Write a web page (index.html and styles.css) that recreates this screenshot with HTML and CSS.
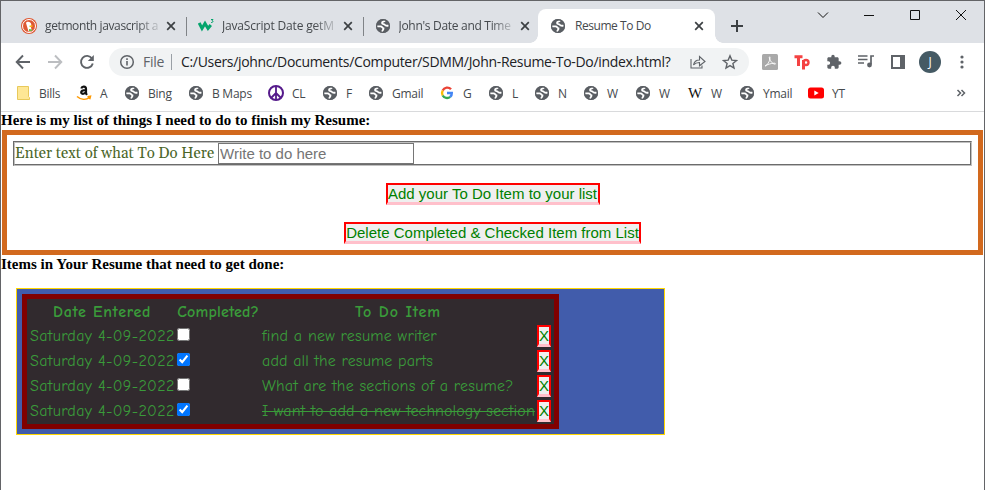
FILE: index.html
```html
<!DOCTYPE html>
<html lang="en">
<head>
<meta charset="utf-8">
<title>Resume To Do</title>
<link rel="stylesheet" href="styles.css">
</head>
<body>
<svg class="defs" width="0" height="0" aria-hidden="true">
  <symbol id="globe" viewBox="0 0 16 16"><circle cx="8" cy="8" r="7" fill="#5a5e63"/><path d="M2 8.300h3.500c1.800 0 1.500 1.700 3 2 .3 1.300-1.200 1.700-1.500 3.500M10 2.500c-.5 1.600-3 .9-3 2.400 0 1.400 2 1 3.200 2.200 1 .9 2 .6 3.500.6" fill="none" stroke="#fff" stroke-width="1.800"/><circle cx="8" cy="8" r="6.400" fill="none" stroke="#5a5e63" stroke-width="1.300"/></symbol>
  <symbol id="x" viewBox="0 0 10 10"><path d="M1.200 1.200l7.600 7.600M8.800 1.200L1.200 8.800" stroke="#3c4043" stroke-width="1.700" fill="none"/></symbol>
</svg>
<div class="window">
  <div class="tabs">
    <div class="tab"><svg class="fav" viewBox="0 0 16 16"><circle cx="8" cy="8" r="8" fill="#de5833"/><circle cx="8" cy="8" r="6.500" fill="none" stroke="#fff" stroke-width="1"/><path d="M5 5C5.500 3 10 3 10.300 6.500L10 9.500l1 3.500-3.500.5z" fill="#fff"/><path d="M8.500 7.500h3.500l-1 1.500H8.500z" fill="#fdb913"/><path d="M8 11l3 .5v1.500H8z" fill="#65bc46"/></svg><span class="title fade t1">getmonth javascript a</span><svg class="x"><use href="#x"/></svg></div>
    <div class="tab"><svg class="fav" viewBox="0 0 16 16"><path d="M1.200 5l2.800 5.500L7 5.500l3 5L12.800 7" fill="none" stroke="#04a46c" stroke-width="3"/><path d="M13 1.500h2l-1 1.300c1.500 0 1.200 2-.9 1.700" fill="none" stroke="#04a46c"/></svg><span class="title fade t2">JavaScript Date getM</span><svg class="x"><use href="#x"/></svg></div>
    <div class="tab"><svg class="fav"><use href="#globe"/></svg><span class="title fade t3">John's Date and Time</span><svg class="x"><use href="#x"/></svg></div>
    <div class="tab active"><svg class="fav"><use href="#globe"/></svg><span class="title t4">Resume To Do</span><svg class="x"><use href="#x"/></svg></div>
    <svg class="plus" viewBox="0 0 12 12"><path d="M6 0v12M0 6h12" stroke="#3c4043" stroke-width="2"/></svg>
    <div class="controls">
      <svg viewBox="0 0 12 12"><path d="M1 3.500l5 5 5-5" /></svg>
      <svg viewBox="0 0 12 12"><path d="M1 6.500h10"/></svg>
      <svg viewBox="0 0 12 12"><path d="M1.500 1.500h9v9h-9z"/></svg>
      <svg viewBox="0 0 12 12"><path d="M1 1l10 10M11 1L1 11"/></svg>
    </div>
  </div>

  <div class="toolbar">
    <div class="nav">
      <svg viewBox="0 0 16 16"><path d="M15 8H2M8 1.500L1.700 8 8 14.500" stroke="#5f6368"/></svg>
      <svg viewBox="0 0 16 16"><path d="M1 8h13M8 1.500L14.300 8 8 14.500" stroke="#bcbec1"/></svg>
      <svg viewBox="0 0 16 16"><path d="M13 4.500A6 6 0 1 0 13.800 9.500" stroke="#5f6368"/><path d="M14.800 1v6h-6z" fill="#5f6368" stroke="none"/></svg>
    </div>
    <div class="omnibox">
      <svg class="info" viewBox="0 0 16 16"><circle cx="8" cy="8" r="6.300" fill="none" stroke="#5f6368" stroke-width="1.500"/><path d="M8 7v4.500M8 4.300v1.600" stroke="#5f6368" stroke-width="1.600"/></svg>
      <span class="scheme">File</span><span class="rule"></span><span class="url">C:/Users/johnc/Documents/Computer/SDMM/John-Resume-To-Do/index.html?</span>
      <svg class="share" viewBox="0 0 16 16"><path d="M1 5v9h11v-2.500M3.500 11c.7-3.500 3-5 6-5V2.500l5.500 5-5.500 4.300V8.500C7 8.500 5 9.200 3.500 11z" fill="none" stroke="#5f6368" stroke-width="1.100"/></svg>
      <svg class="star" viewBox="0 0 16 16"><path d="M8 1.800l1.800 4.300 4.700.4-3.600 3 1.100 4.600-4-2.500-4 2.500 1.100-4.600-3.600-3 4.700-.4z" fill="none" stroke="#5f6368" stroke-width="1.400"/></svg>
    </div>
    <div class="ext">
      <svg viewBox="0 0 16 16"><rect width="16" height="16" rx="1.500" fill="#a9a9a9"/><path d="M3 12c2-.5 5-4.500 5-8.500 0-1-1-1-.7.500C8 7 10.500 10 13 10.200c1 0 .5-1.200-1-1-3 .2-6.500 1.200-9 2.800z" fill="none" stroke="#fff" stroke-width=".9"/></svg>
      <svg viewBox="0 0 16 16"><path d="M.5 2.800h8M4.500 3v9M9.500 6v9.500" stroke="#f44242" stroke-width="3" fill="none"/><circle cx="12" cy="8.500" r="2.500" stroke="#f44242" stroke-width="2.400" fill="none"/></svg>
      <svg viewBox="0 0 24 24"><path fill="#5f6368" d="M20.500 11H19V7c0-1.100-.9-2-2-2h-4V3.500C13 2.120 11.880 1 10.500 1S8 2.120 8 3.500V5H4c-1.100 0-2 .9-2 2v3.800h1.500c1.500 0 2.700 1.200 2.700 2.700S5 16.200 3.500 16.200H2V20c0 1.100.9 2 2 2h3.800v-1.500c0-1.500 1.200-2.700 2.700-2.700s2.700 1.200 2.700 2.700V22H17c1.100 0 2-.9 2-2v-4h1.500c1.380 0 2.500-1.120 2.500-2.500S21.880 11 20.500 11z"/></svg>
      <svg viewBox="0 0 16 16"><path d="M0 2h9.500M0 5.500h9.500M0 9h6M13 10.500V2h3" fill="none" stroke="#5f6368" stroke-width="1.700"/><circle cx="11.500" cy="11" r="2.400" fill="#5f6368"/></svg>
      <svg viewBox="0 0 16 16"><path d="M1 1h14v14H1z" fill="#5f6368"/><path d="M3 3h7v10H3z" fill="#fff"/></svg>
      <span class="avatar">J</span>
      <svg viewBox="0 0 16 16" fill="#5f6368"><circle cx="8" cy="3" r="1.600"/><circle cx="8" cy="8" r="1.600"/><circle cx="8" cy="13" r="1.600"/></svg>
    </div>
  </div>

  <div class="bookmarks">
    <span class="bm"><svg viewBox="0 0 16 16"><path d="M2.500 1.500h11v10l1 1v2h-12z" fill="#fee795" stroke="#e8c95b"/></svg>Bills</span>
    <span class="bm"><svg viewBox="0 0 16 16"><path d="M5.300 3.500C6 1 10 1 10 4v4.500l1 1.300M10 5C6.500 5 5 6 5.200 7.500c.3 2 4 1.700 4.800-1" fill="none" stroke="#111" stroke-width="2.200"/><path d="M1 11.500c4 3.500 9 3.500 12.500 1.200M11.500 11.700l3-.5-.8 3" fill="none" stroke="#f90" stroke-width="1.500"/></svg>A</span>
    <span class="bm"><svg><use href="#globe"/></svg>Bing</span>
    <span class="bm"><svg><use href="#globe"/></svg>B Maps</span>
    <span class="bm"><svg viewBox="0 0 16 16"><path d="M8 1v14M8 8l-5 5M8 8l5 5" stroke="#551a8b" stroke-width="1.800"/><circle cx="8" cy="8" r="7" fill="none" stroke="#551a8b" stroke-width="2"/></svg>CL</span>
    <span class="bm"><svg><use href="#globe"/></svg>F</span>
    <span class="bm"><svg><use href="#globe"/></svg>Gmail</span>
    <span class="bm"><svg viewBox="0 0 16 16" fill="none" stroke-width="2.400"><path d="M12 4.300A5 5 0 0 0 3.700 5.500" stroke="#ea4335"/><path d="M3.700 5.500a5 5 0 0 0 0 5" stroke="#fbbc05"/><path d="M3.700 10.500a5 5 0 0 0 7.500 1.400" stroke="#34a853"/><path d="M11.200 11.900A5 5 0 0 0 12.800 8H8" stroke="#4285f4"/></svg>G</span>
    <span class="bm"><svg><use href="#globe"/></svg>L</span>
    <span class="bm"><svg><use href="#globe"/></svg>N</span>
    <span class="bm"><svg><use href="#globe"/></svg>W</span>
    <span class="bm"><svg><use href="#globe"/></svg>W</span>
    <span class="bm"><span class="wiki">W</span>W</span>
    <span class="bm"><svg><use href="#globe"/></svg>Ymail</span>
    <span class="bm"><svg viewBox="0 0 16 16"><rect y="2.500" width="16" height="11" rx="2.500" fill="#f00"/><path d="M6.300 5.500v5L10.700 8z" fill="#fff"/></svg>YT</span>
    <svg class="more" viewBox="0 0 10 8"><path d="M1.500 1l3 3-3 3M5.500 1l3 3-3 3" fill="none" stroke="#5f6368" stroke-width="1.500"/></svg>
  </div>

  <div class="page">
    <h4 class="h1">Here is my list of things I need to do to finish my Resume:</h4>
    <form class="entry">
      <div class="field"><label>Enter text of what To Do Here</label><input type="text" placeholder="Write to do here"></div>
      <button type="button" class="btn add">Add your To Do Item to your list</button>
      <button type="button" class="btn del">Delete Completed &amp; Checked Item from List</button>
    </form>
    <h4 class="h2">Items in Your Resume that need to get done:</h4>
    <div class="list">
      <div class="table">
        <b class="hd c1">Date Entered</b><b class="hd c2">Completed?</b><b class="hd c3">To Do Item</b><span></span>
        <span class="date">Saturday 4-09-2022</span><input type="checkbox"><span class="i1">find a new resume writer</span><button class="btn del-x">X</button>
        <span class="date">Saturday 4-09-2022</span><input type="checkbox" checked><span class="i2">add all the resume parts</span><button class="btn del-x">X</button>
        <span class="date">Saturday 4-09-2022</span><input type="checkbox"><span class="i3">What are the sections of a resume?</span><button class="btn del-x">X</button>
        <span class="date">Saturday 4-09-2022</span><input type="checkbox" checked><span class="i4"><s>I want to add a new technology section</s></span><button class="btn del-x">X</button>
      </div>
    </div>
  </div>
</div>
</body>
</html>
```
FILE: styles.css
```css
* { box-sizing: border-box; }
body { margin: 0; background: #fff; }
svg { display: block; flex: none; }
.defs { position: absolute; }
.window { width: 985px; height: 490px; border: 1px solid #636467; border-bottom: 0; overflow: hidden; font-family: "Open Sans", sans-serif; }

.tabs { height: 42px; background: #dee1e6; display: flex; padding: 8px 0 0 8px; color: #45494d; font-size: 12px; }
.tab { width: 177px; height: 34px; display: flex; align-items: center; padding: 0 9px 0 12px; position: relative; }
.tab + .tab::before { content: ""; position: absolute; left: 0; top: 8px; width: 1px; height: 19px; background: #808387; }
.tab:nth-child(4)::before { display: none; }
.tab:nth-child(2), .tab:nth-child(3) { width: 176.5px; }
.fav { width: 16px; height: 16px; }
.title { width: 115px; margin-left: 8px; white-space: nowrap; overflow: hidden; line-height: 20px; }
.t1 { letter-spacing: -0.38px; }
.t2 { letter-spacing: -0.18px; }
.t3 { letter-spacing: -0.3px; }
.t4 { letter-spacing: -0.45px; }
.fade { -webkit-mask-image: linear-gradient(90deg, #000 80%, transparent 103%); mask-image: linear-gradient(90deg, #000 80%, transparent 103%); }
.x { width: 10px; height: 10px; margin-left: 6px; }
.active { background: #fff; border-radius: 8px 8px 0 0; width: 177px; margin-left: -1px; }
.active .title { margin-left: 9px; width: 113px; }
.active::after { content: ""; position: absolute; left: -8px; bottom: 0; width: 193px; height: 8px; background: radial-gradient(circle at 0 0, transparent 7.5px, #fff 8px) left / 8px 8px no-repeat, radial-gradient(circle at 100% 0, transparent 7.5px, #fff 8px) right / 8px 8px no-repeat; }
.plus { width: 12px; height: 12px; margin: 11px 0 0 16px; }
.controls { display: flex; gap: 34px; margin: 0 17px 0 auto; }
.controls svg { width: 12px; height: 12px; fill: none; stroke: #111; stroke-width: 1; }

.toolbar { height: 37px; display: flex; align-items: center; padding-left: 14px; }
.nav { display: flex; gap: 16px; width: 94px; }
.nav svg { width: 16px; height: 16px; fill: none; stroke-width: 1.9; }
.omnibox { width: 640px; height: 28px; border-radius: 14px; background: #f1f3f4; display: flex; align-items: center; padding-left: 10px; font-size: 14px; white-space: nowrap; color: #202124; }
.info { width: 16px; height: 16px; }
.scheme { width: 28px; margin-left: 8px; color: #5f6368; letter-spacing: -0.3px; }
.rule { width: 1px; height: 16px; background: #9aa0a6; }
.url { width: 509px; margin-left: 9px; letter-spacing: -0.32px; }
.share { width: 16px; height: 16px; }
.star { width: 16px; height: 16px; margin-left: 16px; }
.ext { display: flex; align-items: center; gap: 16px; margin-left: 13px; }
.ext svg { width: 16px; height: 16px; }
.avatar { width: 22px; height: 22px; margin: 0 -3px; border-radius: 50%; background: #455a64; color: #fff; font-size: 12px; line-height: 22px; text-align: center; }

.bookmarks { height: 32px; border-bottom: 1px solid #d9dadc; padding: 0 0 5px 14px; display: grid; align-items: center; grid-template-columns: 61px 48px 64px 80px 54px 46px 71px 49px 46px 49px 52px 52px 52px 69px 148px 12px; font-size: 12px; letter-spacing: -0.25px; color: #45494d; }
.bm { display: flex; align-items: center; gap: 8px; white-space: nowrap; }
.bm svg { width: 16px; height: 16px; }
.wiki { width: 16px; font: 15px "Liberation Serif", serif; color: #111; text-align: center; }
.more { width: 10px; height: 8px; }

.page { font-family: "Liberation Serif", serif; }
h4 { margin: 0; height: 18px; font-size: 15px; line-height: 18px; white-space: nowrap; color: #000; }
.h1 { line-height: 16px; }
.entry { margin: 0 1px; height: 125px; border: 5px solid #d2691e; padding: 6px; display: flex; flex-direction: column; align-items: center; }
.field { width: 959px; height: 25px; border: 2px groove #c0c0c0; display: flex; align-items: center; }
.field label { width: 203px; font: 15px Georgia, Gelasio, "Liberation Serif", serif; color: #4b6629; white-space: nowrap; }
.field input { width: 196px; height: 21px; padding: 0 1px; border: 1px solid #767676; font: 15px "Liberation Sans", sans-serif; }
.btn { height: 22px; padding: 0; border: 2px solid red; border-bottom: 3px solid pink; background: #efefef; color: green; font: 15px/17px "Liberation Sans", sans-serif; white-space: nowrap; }
.add { width: 214px; margin-top: 17px; }
.del { width: 297px; margin-top: 17px; }
.list { width: 649px; height: 147px; margin: 15px 0 0 15px; border: 1px solid gold; background: #415cab; padding: 5px; }
.table { width: 537px; height: 135px; border: 5px solid maroon; background: #312a2e; padding: 2px 3px; display: grid; grid-template-columns: 144px 82px 272px 14px; column-gap: 3px; grid-template-rows: 23px repeat(4, 25px); color: #3a9b3a; font: 16px/25px "Comic Sans MS", "Comic Neue", "Open Sans", sans-serif; white-space: nowrap; }
.hd { text-align: center; line-height: 23px; }
.c1 { letter-spacing: 0.7px; }
.c2 { letter-spacing: 0.2px; }
.c3 { letter-spacing: 0.9px; }
.date { letter-spacing: 0.33px; }
.i1 { letter-spacing: 0.22px; }
.i2 { letter-spacing: 0.15px; }
.i3 { letter-spacing: 0.2px; }
.i4 { letter-spacing: 0.12px; }
.table input { width: 13px; height: 13px; margin: 4px 0 0; }
.del-x { width: 14px; margin-top: 1px; }
```
